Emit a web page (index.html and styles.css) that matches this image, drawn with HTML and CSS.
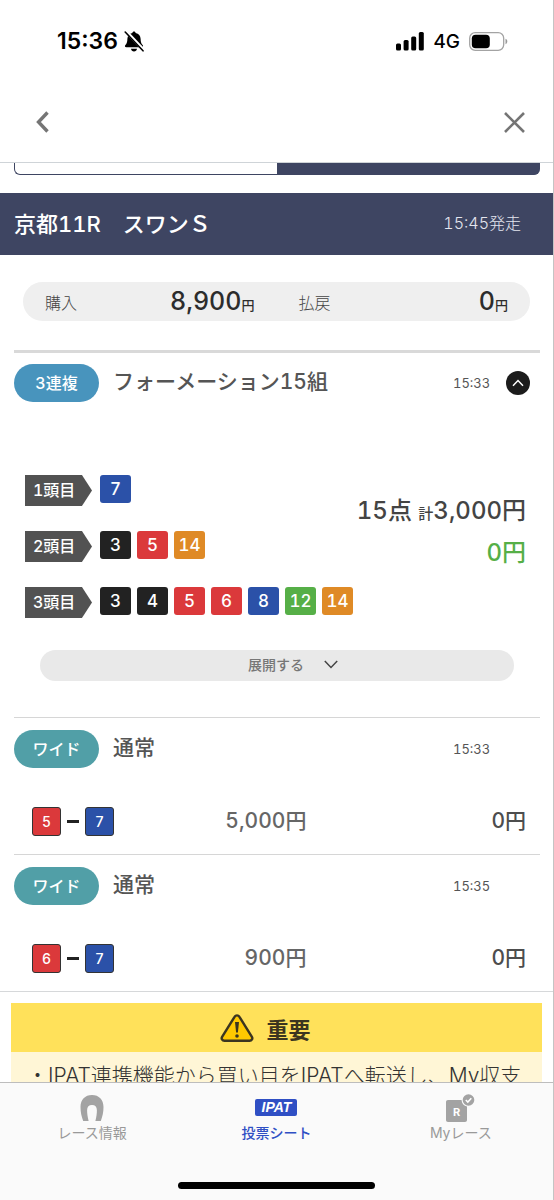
FILE: index.html
```
<!DOCTYPE html>
<html lang="ja">
<head>
<meta charset="utf-8">
<meta name="viewport" content="width=device-width, initial-scale=1">
<title>投票シート</title>
<link rel="stylesheet" href="styles.css">
</head>
<body>
<div class="app">
  <div class="status">
    <div class="status-left">
      <span class="clock">15:36</span>
      <svg width="20" height="21" viewBox="0 0 20 21" aria-hidden="true">
        <path d="M10 .5c.9 0 1.500.6 1.600 1.400 3.200.7 4.900 2.900 5 5.800.1 3.300.6 4.800 2 6.300.9 1 .5 2.300-.9 2.300H2.300c-1.400 0-1.800-1.300-.9-2.300 1.400-1.500 1.900-3 2-6.300.1-2.900 1.800-5.100 5-5.800C8.500 1.100 9.100.5 10 .5zM7 17.800h6c-.3 1.700-1.400 2.600-3 2.600s-2.700-.9-3-2.600z" fill="#000"/>
        <path d="M2.300.6l17.200 18.200" stroke="#fff" stroke-width="3.200"/>
        <path d="M1.200 1l17.800 18.800" stroke="#000" stroke-width="1.600" stroke-linecap="round"/>
      </svg>
    </div>
    <div class="status-right">
      <svg width="28" height="19" viewBox="0 0 28 19" aria-hidden="true">
        <rect x="0" y="11.500" width="5" height="7" rx="1.500"/><rect x="7.600" y="8" width="5" height="10.500" rx="1.500"/><rect x="15.200" y="4.500" width="5" height="14" rx="1.500"/><rect x="22.800" y="0" width="5" height="18.500" rx="1.500"/>
      </svg>
      <span class="network">4G</span>
      <svg width="39" height="19" viewBox="0 0 39 19" aria-hidden="true">
        <rect x=".7" y=".7" width="34" height="17.600" rx="5.500" fill="#fff" stroke="#a3a3a3" stroke-width="1.300"/>
        <rect x="2.800" y="2.800" width="18" height="13.400" rx="3.800"/>
        <path d="M36.500 6.800c2.400.7 2.400 4.700 0 5.400z" fill="#999"/>
      </svg>
    </div>
  </div>

  <header class="nav">
    <button class="icon-button" type="button" aria-label="戻る">
      <svg width="13" height="22" viewBox="0 0 13 22"><path d="M11.500 1.500L2.500 11l9 9.500" fill="none" stroke="#757575" stroke-width="3.400"/></svg>
    </button>
    <button class="icon-button" type="button" aria-label="閉じる">
      <svg width="21" height="21" viewBox="0 0 21 21"><path d="M1 1l19 19M20 1L1 20" fill="none" stroke="#757575" stroke-width="2.600"/></svg>
    </button>
  </header>

  <main class="content">
    <div class="segments">
      <span class="segment"></span>
      <span class="segment segment-on"></span>
    </div>

    <div class="race">
      <h1 class="race-name">京都11R　スワンＳ</h1>
      <span class="race-start">15:45発走</span>
    </div>

    <dl class="summary">
      <dt>購入</dt>
      <dd>8,900<small>円</small></dd>
      <dt>払戻</dt>
      <dd>0<small>円</small></dd>
    </dl>

    <section class="bet bet-first">
      <div class="bet-head">
        <span class="badge badge-blue">3連複</span>
        <h2 class="bet-title">フォーメーション15組</h2>
        <time class="bet-time">15:33</time>
        <button class="collapse" type="button" aria-label="閉じる">
          <svg width="12" height="8" viewBox="0 0 12 8"><path d="M1 6.800L6 1.500l5 5.300" fill="none" stroke="#fff" stroke-width="1.500"/></svg>
        </button>
      </div>
      <div class="formation">
        <div class="legs">
          <div class="leg"><span class="tag">1頭目</span><span class="chip blue">7</span></div>
          <div class="leg"><span class="tag">2頭目</span><span class="chip black">3</span><span class="chip red">5</span><span class="chip orange">14</span></div>
          <div class="leg"><span class="tag">3頭目</span><span class="chip black">3</span><span class="chip black">4</span><span class="chip red">5</span><span class="chip red">6</span><span class="chip blue">8</span><span class="chip green">12</span><span class="chip orange">14</span></div>
        </div>
        <div class="total">
          <div class="total-cost">15点 <small>計</small>3,000円</div>
          <div class="total-return">0円</div>
        </div>
      </div>
      <button class="expand" type="button">展開する
        <svg width="14" height="9" viewBox="0 0 14 9" aria-hidden="true"><path d="M.8 1l6.200 6.500L13.200 1" fill="none" stroke="#444" stroke-width="1.500"/></svg>
      </button>
    </section>

    <section class="bet">
      <div class="bet-head">
        <span class="badge badge-teal">ワイド</span>
        <h2 class="bet-title">通常</h2>
        <time class="bet-time">15:33</time>
      </div>
      <div class="pair-row">
        <div class="pair"><span class="cell red">5</span><span class="dash"></span><span class="cell blue">7</span></div>
        <span class="stake">5,000円</span>
        <span class="payout">0円</span>
      </div>
    </section>

    <section class="bet">
      <div class="bet-head">
        <span class="badge badge-teal">ワイド</span>
        <h2 class="bet-title">通常</h2>
        <time class="bet-time">15:35</time>
      </div>
      <div class="pair-row">
        <div class="pair"><span class="cell red">6</span><span class="dash"></span><span class="cell blue">7</span></div>
        <span class="stake">900円</span>
        <span class="payout">0円</span>
      </div>
    </section>

    <section class="notice-area">
      <div class="notice">
        <h2 class="notice-head">
          <svg width="34" height="28" viewBox="0 0 34 28" aria-hidden="true">
            <path d="M14.700 2.600c1-1.700 3.600-1.700 4.600 0l12.600 20.200c1.100 1.800-.1 3.900-2.300 3.900H4.400c-2.200 0-3.400-2.100-2.300-3.900z" fill="#ffc800" stroke="#3b3520" stroke-width="2.400"/>
            <path d="M15 8h4l-1.100 10.500h-1.800z" fill="#3b3520"/><circle cx="17" cy="22" r="1.800" fill="#3b3520"/>
          </svg>
          重要
        </h2>
        <p class="notice-text">・IPAT連携機能から買い目をIPATへ転送し、My収支</p>
      </div>
    </section>
  </main>

  <nav class="tabs">
    <a class="tab" href="#race">
      <span class="tab-icon">
        <svg width="24" height="28" viewBox="0 0 24 28" aria-hidden="true"><path d="M3.200 27C1.500 22.500.5 18 .5 13 .5 5.800 5 1 12 1s11.500 4.800 11.500 12c0 5-1 9.500-2.700 14h-5.400c1-4.300 1.500-7.500 1.500-10.800 0-3.300-1.800-5.200-4.900-5.200s-4.900 1.900-4.900 5.200c0 3.300.5 6.500 1.500 10.800z" fill="#a3a3a3"/></svg>
      </span>
      レース情報
    </a>
    <a class="tab tab-on" href="#sheet">
      <span class="tab-icon"><span class="ipat">IPAT</span></span>
      投票シート
    </a>
    <a class="tab" href="#my">
      <span class="tab-icon">
        <svg width="29" height="28" viewBox="0 0 29 28" aria-hidden="true">
          <path d="M2 6h13.500c.5 4 2.500 6 5.500 6.500v13.500c0 1-.8 2-2 2H2c-1.200 0-2-1-2-2V8c0-1.200.8-2 2-2z" fill="#a3a3a3"/>
          <circle cx="22.500" cy="6" r="5.800" fill="#a3a3a3"/><path d="M19.800 6l2 2 3.500-3.800" fill="none" stroke="#fff" stroke-width="1.600"/>
          <text class="tab-letter" x="10.500" y="21.500" text-anchor="middle">R</text>
        </svg>
      </span>
      Myレース
    </a>
    <span class="home-bar"></span>
  </nav>
</div>
</body>
</html>
```
FILE: styles.css
```
* { box-sizing: border-box; }

body {
  margin: 0;
  background: #fff;
  color: #444;
  font-family: Inter, "Noto Sans CJK JP", sans-serif;
  font-variant-numeric: tabular-nums;
}

h1, h2, p, dl, dd { margin: 0; }

button {
  padding: 0;
  border: 0;
  background: none;
  font: inherit;
  color: inherit;
}

svg { display: block; }

.app {
  display: flex;
  flex-direction: column;
  height: 100vh;
  overflow: hidden;
  border-right: 1px solid #c4c4c4;
}

.status {
  display: flex;
  flex: none;
  justify-content: space-between;
  height: 82px;
  padding: 0 45px 0 57px;
  color: #000;
}

.status-left, .status-right {
  display: flex;
  align-items: center;
}
.status-left { gap: 6px; font-variant-numeric: normal; }
.status-right { gap: 9px; }
.clock { font-size: 23px; font-weight: 600; }
.network { font-size: 19px; font-weight: 500; }

.nav {
  display: flex;
  flex: none;
  justify-content: space-between;
  height: 81px;
  padding: 0 28px 0 36px;
  border-bottom: 1px solid #cfd4d8;
}
.icon-button { display: flex; align-items: center; }

.content { flex: 1; min-height: 0; overflow: hidden; }

.segments { display: flex; height: 12px; margin: 0 13px 18px 14px; }
.segment {
  flex: 1;
  border: solid #3e4562;
  border-width: 0 0 1px 1px;
  border-radius: 0 0 0 6px;
}
.segment-on { background: #3e4562; border-radius: 0 0 6px 0; }

.race {
  display: flex;
  align-items: center;
  justify-content: space-between;
  height: 62px;
  padding: 0 32px 4px 14px;
  background: #3e4562;
  color: #fff;
}
.race-name { font-size: 22px; font-weight: 500; }
.race-start { font-size: 16px; font-weight: 300; color: #e4e6ef; }

.summary {
  display: grid;
  grid-template-columns: 1fr 3fr 1fr 3fr;
  column-gap: 44px;
  align-items: center;
  height: 39px;
  margin: 27px 23px 29px;
  padding: 0 22px;
  border-radius: 20px;
  background: #efefef;
}
.summary dt {
  padding-bottom: 3px;
  font-size: 16px;
  font-weight: 300;
  white-space: nowrap;
}
.summary dd {
  color: #2c2c2c;
  font-size: 25px;
  font-weight: 500;
  line-height: 38px;
  text-align: right;
  white-space: nowrap;
}
.summary small { font-size: 13px; }

.bet { margin: 0 13px 0 14px; border-top: 1px solid #d6d6d6; }
.bet-first { border-top: 3px solid #d9d9d9; }

.bet-head {
  display: flex;
  align-items: center;
  height: 62px;
  padding-right: 10px;
}
.bet-first .bet-head { height: 60px; }
.badge {
  width: 85px;
  margin-right: 14px;
  border-radius: 20px;
  color: #fff;
  font-size: 16px;
  font-weight: 500;
  line-height: 38px;
  text-align: center;
}
.badge-blue { background: #4894bd; }
.badge-teal { background: #519fa7; }
.bet-title {
  flex: 1;
  padding-bottom: 3px;
  color: #555;
  font-size: 21px;
  font-weight: 500;
  line-height: 38px;
}
.bet-time { width: 53px; color: #555; font-size: 13px; }
.collapse {
  display: grid;
  place-items: center;
  width: 24px;
  height: 24px;
  border-radius: 50%;
  background: #1c1c1c;
}
.bet-head > .bet-time:last-child { margin-right: 24px; }

.formation {
  display: flex;
  justify-content: space-between;
  padding: 62px 14px 0 11px;
}
.legs { display: grid; gap: 25px; }
.leg { display: flex; align-items: flex-start; gap: 6px; }
.tag {
  width: 67px;
  margin-right: 2px;
  padding-left: 8px;
  background: #525252;
  clip-path: polygon(0 0, 85% 0, 100% 50%, 85% 100%, 0 100%);
  color: #fff;
  font-size: 16px;
  font-weight: 500;
  line-height: 31px;
}
.chip {
  width: 31px;
  border-radius: 3px;
  color: #fff;
  font-size: 17px;
  font-weight: 500;
  line-height: 28px;
  text-align: center;
}
.black { background: #222; }
.red { background: #db393b; }
.blue { background: #2b51a8; }
.green { background: #56af47; }
.orange { background: #df8a26; }

.total {
  margin-left: -60px;
  padding-top: 16px;
  font-size: 24px;
  font-weight: 500;
  line-height: 39px;
  text-align: right;
  white-space: nowrap;
}
.total small { font-size: 15px; }
.total-return { color: #56af47; }

.expand {
  display: flex;
  align-items: center;
  justify-content: center;
  gap: 20px;
  width: calc(100% - 52px);
  height: 31px;
  margin: 32px 26px 36px;
  padding: 0 0 3px 32px;
  border-radius: 16px;
  background: #e9e9e9;
  color: #777;
  font-size: 14px;
  font-weight: 500;
}

.pair-row {
  display: grid;
  grid-template-columns: 3fr 7fr 8fr;
  align-items: center;
  padding: 26px 14px 18px 18px;
  font-size: 21px;
  font-weight: 500;
  line-height: 30px;
  text-align: right;
}
.pair { display: flex; align-items: center; }
.cell {
  width: 29px;
  border: 1px solid #333;
  border-radius: 3px;
  color: #fff;
  font-size: 14px;
  line-height: 27px;
  text-align: center;
}
.dash { width: 12px; height: 3px; margin: 0 6px; background: #222; }
.stake { color: #666; }
.payout { color: #4d4d4d; }

.notice-area { padding: 11px 11px 0; border-top: 1px solid #d6d8da; }
.notice { background: #fff6d6; }
.notice-head {
  display: flex;
  align-items: center;
  justify-content: center;
  gap: 12px;
  height: 49px;
  padding-right: 22px;
  background: #ffe15a;
  color: #3b3520;
  font-size: 22px;
  font-weight: 700;
}
.notice-text {
  padding: 8px 16px;
  color: #333;
  font-size: 21px;
  font-weight: 300;
  line-height: 32px;
  white-space: nowrap;
}

.tabs {
  display: grid;
  flex: none;
  grid-template-columns: repeat(3, 1fr);
  justify-items: center;
  padding: 10px 0 11px;
  border-top: 1px solid #bdbdbd;
  background: #fafafa;
}
.tab {
  display: flex;
  flex-direction: column;
  align-items: center;
  color: #999;
  font-size: 14px;
  line-height: 22px;
  text-decoration: none;
}
.tab-on { color: #2f4fc4; font-weight: 500; }
.tab-icon { display: grid; place-items: center; height: 29px; }
.tab-letter { fill: #fff; font: 700 11px Inter, sans-serif; }
.ipat {
  width: 42px;
  border-radius: 2px;
  background: #2f4fc4;
  color: #fff;
  font: italic 700 14px/17px "Liberation Sans", Arial, sans-serif;
  text-align: center;
}
.home-bar {
  grid-column: 1 / -1;
  width: 197px;
  height: 7px;
  margin-top: 38px;
  border-radius: 4px;
  background: #000;
}
```
